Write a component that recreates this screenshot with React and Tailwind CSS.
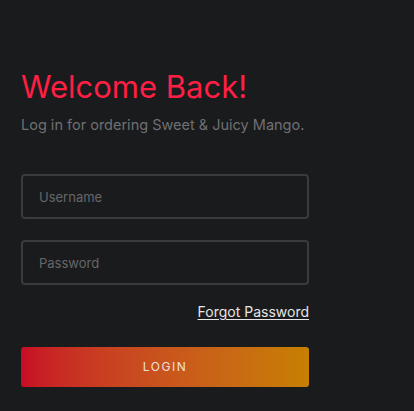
import React from 'react';

export default function App() {
  return (
    <div className="min-h-[411px] w-full bg-[#1a1b1d] pt-[67px] pl-[21px]" style={{ fontFamily: 'Inter, "Noto Sans", sans-serif' }}>
      <div className="w-[288px]">
        <h1 className="text-[31px] leading-[40px] text-[#ff1f44] font-normal tracking-[0px]">Welcome Back!</h1>
        <p className="mt-[8px] text-[14.5px] leading-[20px] text-[#6f7073]">Log in for ordering Sweet &amp; Juicy Mango.</p>

        <form className="mt-[39px] flex flex-col" onSubmit={e => e.preventDefault()}>
          <input
            type="text"
            placeholder="Username"
            className="h-[45px] w-full rounded-[4px] border-2 border-[#3a3b3e] bg-[#1a1b1d] px-[16px] text-[13px] text-[#ddd] placeholder:text-[#66676a] outline-none"
          />
          <input
            type="password"
            placeholder="Password"
            className="mt-[21px] h-[45px] w-full rounded-[4px] border-2 border-[#3a3b3e] bg-[#1a1b1d] px-[16px] text-[13px] text-[#ddd] placeholder:text-[#66676a] outline-none"
          />
          <div className="mt-[17px] flex justify-end">
            <a href="#" className="text-[14px] leading-[20px] text-[#e6e6e6] underline underline-offset-2">Forgot Password</a>
          </div>
          <button
            type="submit"
            className="mt-[25px] h-[40px] w-full rounded-[3px] bg-gradient-to-r from-[#c70a25] to-[#c77f00] text-[12px] tracking-[1.5px] text-[#f0e0dc]"
          >
            LOGIN
          </button>
        </form>
      </div>
    </div>
  );
}
